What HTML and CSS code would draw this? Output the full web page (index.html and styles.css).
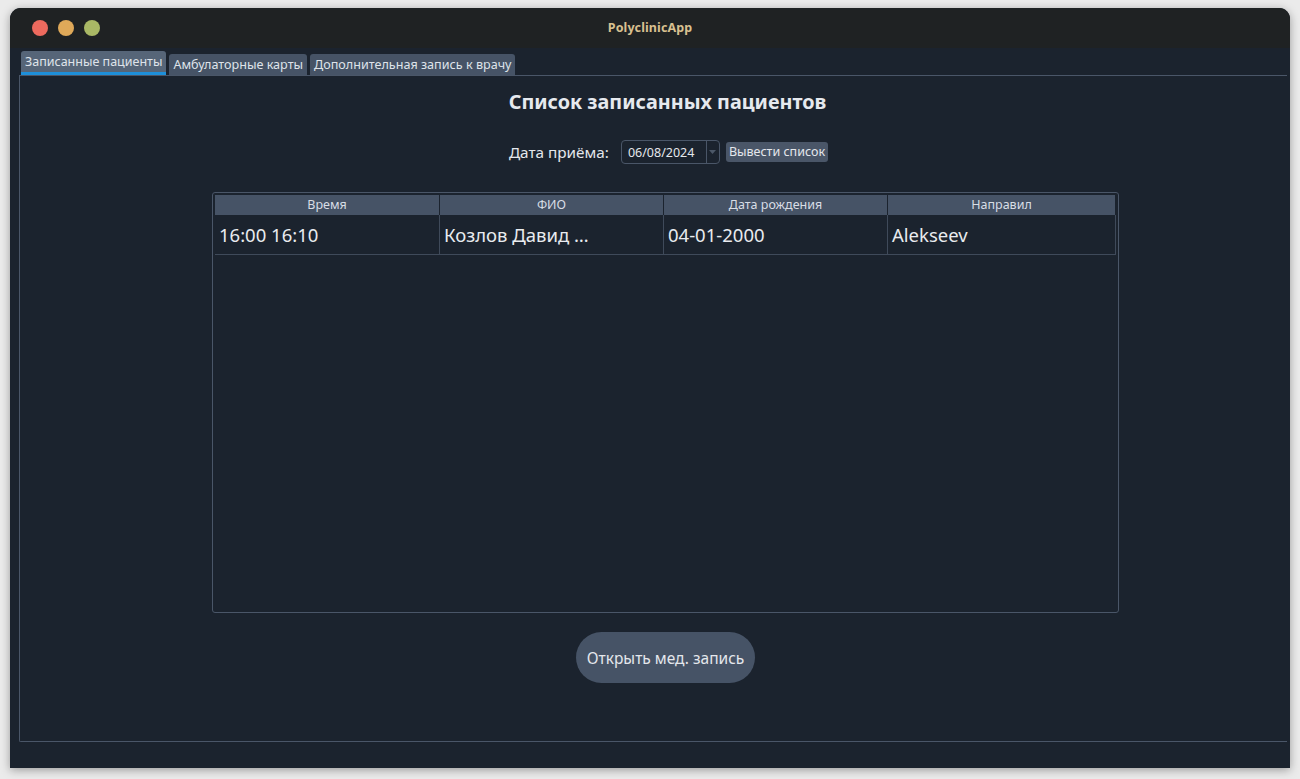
FILE: index.html
```html
<!DOCTYPE html>
<html lang="ru">
<head>
<meta charset="utf-8">
<title>PolyclinicApp</title>
<link rel="stylesheet" href="styles.css">
</head>
<body>
<div class="window">
  <div class="titlebar">
    <div class="lights">
      <span class="light red"></span>
      <span class="light yellow"></span>
      <span class="light green"></span>
    </div>
    <div class="title">PolyclinicApp</div>
  </div>
  <div class="content">
    <div class="tabs">
      <div class="tab active">Записанные пациенты</div>
      <div class="tab">Амбулаторные карты</div>
      <div class="tab">Дополнительная запись к врачу</div>
    </div>
    <div class="pane">
      <h1 class="heading">Список записанных пациентов</h1>
      <div class="filter">
        <span class="label">Дата приёма:</span>
        <div class="datebox">
          <span class="datevalue">06/08/2024</span>
          <span class="dropbtn"><svg width="7" height="4" viewBox="0 0 7 4"><path d="M0 0H7L3.5 4Z" fill="#4c5868"/></svg></span>
        </div>
        <button class="smallbtn">Вывести список</button>
      </div>
      <div class="tableframe">
        <div class="table">
          <div class="hcell">Время</div>
          <div class="hcell">ФИО</div>
          <div class="hcell">Дата рождения</div>
          <div class="hcell">Направил</div>
          <div class="cell">16:00 16:10</div>
          <div class="cell">Козлов Давид …</div>
          <div class="cell">04-01-2000</div>
          <div class="cell">Alekseev</div>
        </div>
      </div>
      <div class="actions">
        <button class="bigbtn">Открыть мед. запись</button>
      </div>
    </div>
  </div>
</div>
</body>
</html>
```

FILE: styles.css
```css
html, body {
  margin: 0;
  padding: 0;
}
body {
  background: #ebebeb;
  width: 1300px;
  height: 779px;
  overflow: hidden;
  font-family: "Noto Sans", "Open Sans", sans-serif;
}
.window {
  margin: 8px 10px 0 10px;
  width: 1280px;
  height: 760px;
  border-radius: 11px 11px 0 0;
  overflow: hidden;
  background: #1b232e;
  box-shadow: 0 2px 10px rgba(0,0,0,0.35);
  display: flex;
  flex-direction: column;
}
.titlebar {
  height: 40px;
  background: #1f2223;
  display: flex;
  align-items: center;
  position: relative;
  flex: none;
}
.lights {
  display: flex;
  gap: 10px;
  padding-left: 22px;
}
.light {
  width: 16px;
  height: 16px;
  border-radius: 50%;
  display: block;
}
.red { background: #ed6a5e; }
.yellow { background: #dfa959; }
.green { background: #a9b865; }
.title {
  position: absolute;
  left: 0;
  right: 0;
  top: 0;
  line-height: 40px;
  text-align: center;
  color: #d8c090;
  font-weight: bold;
  font-size: 12.5px;
  letter-spacing: 0.1px;
}
.content {
  flex: 1;
  padding: 3px 0 26px 9px;
  display: flex;
  flex-direction: column;
}
.tabs {
  display: flex;
  gap: 3px;
  padding-left: 2px;
  height: 24px;
  flex: none;
}
.tab {
  height: 21px;
  line-height: 21px;
  padding: 0 4px;
  background: #465366;
  color: #dfe3ea;
  font-size: 12.6px;
  border-radius: 3px 3px 0 0;
  margin-top: 3px;
  white-space: nowrap;
}
.tab.active {
  background: #566578;
  height: 21px;
  margin-top: 0;
  border-bottom: 3px solid #1e8fd9;
  line-height: 22px;
  padding: 0 4px;
  font-size: 12.5px;
}
.pane {
  flex: 1;
  border-top: 1px solid #4a5668;
  border-left: 1px solid #4a5668;
  border-bottom: 1px solid #4a5668;
  border-bottom-left-radius: 2px;
  margin-right: 3px;
  padding-left: 24px;
  display: flex;
  flex-direction: column;
  align-items: center;
}
.heading {
  margin: 13px 0 0 0;
  font-size: 19.8px;
  font-weight: bold;
  color: #e6e9ee;
  line-height: 26px;
  padding-left: 4px;
}
.filter {
  margin-top: 25px;
  display: flex;
  align-items: center;
  height: 24px;
  padding-left: 6px;
}
.label {
  color: #e4e7ec;
  font-size: 15.3px;
  margin-right: 12px;
}
.datebox {
  width: 97px;
  height: 22px;
  border: 1px solid #4a5668;
  border-radius: 4px;
  display: flex;
  align-items: center;
  box-sizing: content-box;
}
.datevalue {
  flex: 1;
  padding-left: 6px;
  color: #e4e7ec;
  font-size: 12.5px;
}
.dropbtn {
  width: 12px;
  height: 100%;
  border-left: 1px solid #4a5668;
  display: flex;
  align-items: center;
  justify-content: center;
}
.smallbtn {
  margin-left: 6px;
  height: 20px;
  padding: 0 3px;
  background: #4a5668;
  color: #e4e7ec;
  border: none;
  border-radius: 3px;
  font-family: inherit;
  font-size: 12.5px;
  line-height: 20px;
}
.tableframe {
  margin-top: 28px;
  width: 901px;
  height: 417px;
  border: 1px solid #4a5668;
  border-radius: 3px;
  padding: 2px 2px 0 2px;
  box-sizing: content-box;
}
.table {
  display: grid;
  grid-template-columns: 225px 224px 224px 228px;
  width: 901px;
}
.hcell {
  height: 20px;
  line-height: 20px;
  background: #465366;
  color: #d8dde5;
  font-size: 12.5px;
  text-align: center;
  border-right: 1px solid #1b232e;
}
.hcell:last-child { border-right: none; }
.cell {
  height: 39px;
  line-height: 39px;
  border-right: 1px solid #3f4a5a;
  border-bottom: 1px solid #3f4a5a;
  color: #e9ebef;
  font-size: 18.5px;
  padding-left: 4px;
  white-space: nowrap;
  overflow: hidden;
}
.actions {
  margin-top: 19px;
  display: flex;
  justify-content: center;
}
.bigbtn {
  width: 179px;
  height: 51px;
  border-radius: 26px;
  background: #465366;
  color: #e4e7ec;
  border: none;
  font-family: inherit;
  font-size: 15.5px;
}
```
